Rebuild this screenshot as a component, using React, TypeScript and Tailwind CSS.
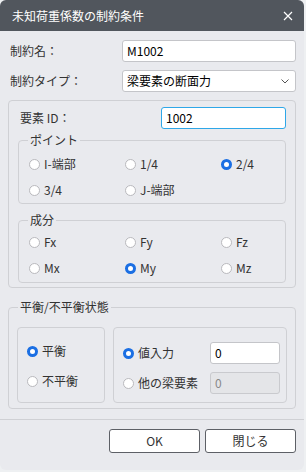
import React from "react";

const font = { fontFamily: '"Noto Sans CJK JP", "Noto Sans", sans-serif' };

const Radio = ({ checked, label }: { checked?: boolean; label: string }) => (
  <label className="flex items-center gap-[4px] h-[26px] text-[12px] text-[#333]">
    <span
      className={
        checked
          ? "w-[11px] h-[11px] rounded-full bg-white border-[3px] border-[#1b6fe3]"
          : "w-[11px] h-[11px] rounded-full bg-white border border-[#b9b9bd]"
      }
    />
    <span>{label}</span>
  </label>
);

const App = () => {
  return (
    <div className="w-[306px] h-[472px] bg-[#eef0f2]" style={font}>
      <div className="w-[304px] h-[470px] flex flex-col bg-[#e9eaee] rounded-b-[6px] rounded-t-[6px] overflow-hidden">
        {/* title */}
        <div className="h-[31px] bg-[#51565d] flex items-center justify-between pl-[12px] pr-[11px]">
          <span className="text-white text-[12px]">未知荷重係数の制約条件</span>
          <svg width="10" height="10" viewBox="0 0 10 10">
            <path d="M1 1 L9 9 M9 1 L1 9" stroke="#fff" strokeWidth="1.2" />
          </svg>
        </div>

        <div className="flex flex-col px-[8px] pr-[8px]">
          <div className="flex items-center mt-[9px] h-[22px]">
            <span className="w-[114px] pl-[2px] text-[12px] text-[#333]">制約名：</span>
            <div className="flex-1 h-[22px] bg-white border border-[#c4c5c9] rounded-[3px] flex items-center pl-[4px] text-[12px] text-black">
              M1002
            </div>
          </div>
          <div className="flex items-center mt-[8px] h-[22px]">
            <span className="w-[114px] pl-[2px] text-[12px] text-[#333]">制約タイプ：</span>
            <div className="flex-1 h-[22px] bg-white border border-[#c4c5c9] rounded-[3px] flex items-center justify-between pl-[4px] pr-[6px] text-[12px] text-black">
              <span>梁要素の断面力</span>
              <svg width="8" height="5" viewBox="0 0 8 5">
                <path d="M0.5 0.5 L4 4 L7.5 0.5" stroke="#555" strokeWidth="1" fill="none" />
              </svg>
            </div>
          </div>

          {/* element box */}
          <div className="mt-[8px] h-[188px] border border-[#cfd0d4] rounded-[4px] px-[9px] pt-[6px]">
            <div className="flex items-center h-[22px]">
              <span className="w-[143px] pl-[2px] text-[12px] text-[#333]">要素 ID：</span>
              <div className="flex-1 h-[22px] bg-white border border-[#2ea7e8] rounded-[3px] flex items-center pl-[4px] text-[12px] text-black">
                1002
              </div>
            </div>

            <fieldset className="mt-[4px] border border-[#cfd0d4] rounded-[4px] pl-[10px] pt-[4px] pb-[0px]">
              <legend className="ml-[-1px] px-[2px] text-[12px] leading-[14px] text-[#333]">ポイント</legend>
              <div className="grid grid-cols-[96px_96px_1fr]">
                <Radio label="I-端部" />
                <Radio label="1/4" />
                <Radio label="2/4" checked />
                <Radio label="3/4" />
                <Radio label="J-端部" />
              </div>
            </fieldset>

            <fieldset className="mt-[9px] border border-[#cfd0d4] rounded-[4px] pl-[10px] pt-[2px] pb-[1px]">
              <legend className="ml-[-1px] px-[2px] text-[12px] leading-[14px] text-[#333]">成分</legend>
              <div className="grid grid-cols-[96px_96px_1fr]">
                <Radio label="Fx" />
                <Radio label="Fy" />
                <Radio label="Fz" />
                <Radio label="Mx" />
                <Radio label="My" checked />
                <Radio label="Mz" />
              </div>
            </fieldset>
          </div>

          {/* balance */}
          <fieldset className="mt-[12px] h-[109px] border border-[#cfd0d4] rounded-[4px] px-[8px] pb-[9px]">
            <legend className="ml-[1px] px-[2px] text-[12px] leading-[14px] text-[#333]">平衡/不平衡状態</legend>
            <div className="flex gap-[8px] mt-[13px]">
              <div className="w-[88px] h-[76px] border border-[#cfd0d4] rounded-[4px] pl-[9px] pt-[10px] flex flex-col gap-[4px]">
                <Radio label="平衡" checked />
                <Radio label="不平衡" />
              </div>
              <div className="flex-1 h-[76px] border border-[#cfd0d4] rounded-[4px] pl-[9px] pr-[6px] pt-[12px] flex flex-col gap-[8px]">
                <div className="flex items-center justify-between">
                  <Radio label="値入力" checked />
                  <div className="w-[70px] h-[22px] bg-white border border-[#c4c5c9] rounded-[3px] flex items-center pl-[4px] text-[12px] text-black">
                    0
                  </div>
                </div>
                <div className="flex items-center justify-between -mt-[4px]">
                  <Radio label="他の梁要素" />
                  <div className="w-[70px] h-[22px] bg-[#e4e5e8] border border-[#c9cace] rounded-[3px] flex items-center pl-[4px] text-[12px] text-[#888]">
                    0
                  </div>
                </div>
              </div>
            </div>
          </fieldset>
        </div>

        <div className="mt-[10px] border-t border-[#cfd0d4] flex justify-end gap-[5px] pr-[8px] pt-[9px]">
          <button className="w-[91px] h-[24px] bg-white border border-[#5d6066] rounded-[3px] text-[12px] text-[#333]">
            OK
          </button>
          <button className="w-[91px] h-[24px] bg-white border border-[#5d6066] rounded-[3px] text-[12px] text-[#333]">
            閉じる
          </button>
        </div>
      </div>
    </div>
  );
};

export default App;
